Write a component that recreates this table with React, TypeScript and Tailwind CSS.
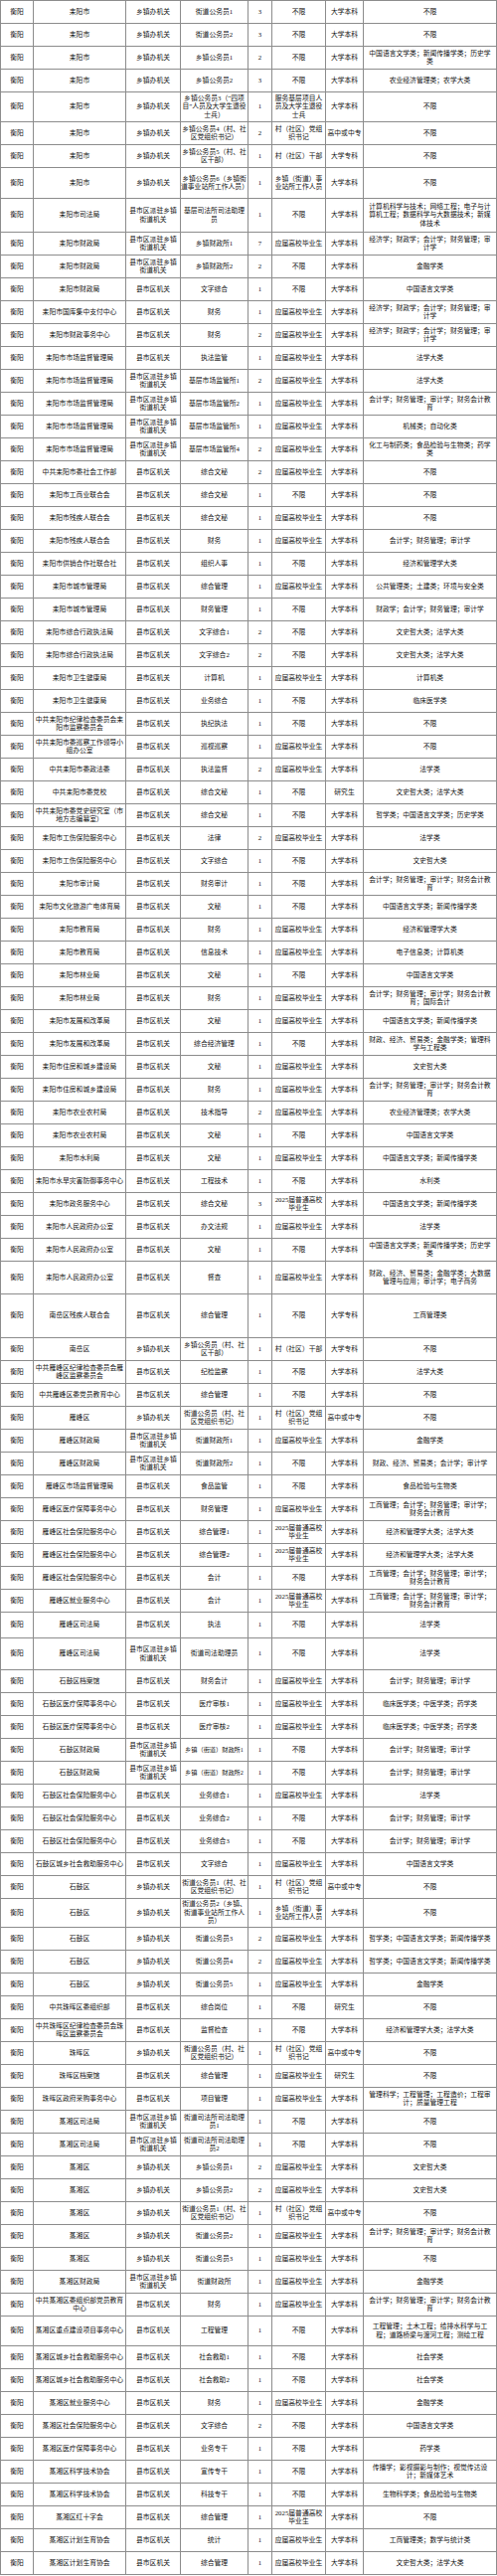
type Row = [string, string, string, number, string, string, string, string?, string?];

const A = "县市区机关";
const P = "县市区派驻乡镇街道机关";
const X = "乡镇办机关";
const Y = "应届高校毕业生";
const N = "不限";
const B = "大学本科";
const Z = "大学专科";
const G = "高中或中专";
const R = "研究生";
const J = "2025届普通高校毕业生";
const S = "村（社区）党组织书记";
const KC = "会计学；财务管理；审计学";
const KJ = "会计学；财务管理；审计学；财务会计教育";
const JC = "经济学；财政学；会计学；财务管理；审计学";
const GS = "工商管理；会计学；财务管理；审计学；财务会计教育";

const rows: Row[] = [
  ["耒阳市", X, "街道公务员1", 3, N, B, N],
  ["耒阳市", X, "街道公务员2", 3, N, B, N],
  ["耒阳市", X, "乡镇公务员1", 2, N, B, "中国语言文学类；新闻传播学类；历史学类"],
  ["耒阳市", X, "乡镇公务员2", 3, N, B, "农业经济管理类；农学大类"],
  ["耒阳市", X, "乡镇公务员3（“四项目”人员及大学生退役士兵）", 1, "服务基层项目人员及大学生退役士兵", B, N, "h-[30px]"],
  ["耒阳市", X, "乡镇公务员4（村、社区党组织书记）", 2, S, G, N],
  ["耒阳市", X, "乡镇公务员5（村、社区干部）", 1, "村（社区）干部", Z, N],
  ["耒阳市", X, "乡镇公务员6（乡镇街道事业站所工作人员）", 1, "乡镇（街道）事业站所工作人员", B, N, "h-[31px]"],
  ["耒阳市司法局", P, "基层司法所司法助理员", 1, N, B, "计算机科学与技术；网络工程；电子与计算机工程；数据科学与大数据技术；新媒体技术", "h-[34px]"],
  ["耒阳市财政局", P, "乡镇财政所1", 7, Y, B, JC],
  ["耒阳市财政局", P, "乡镇财政所2", 2, N, B, "金融学类"],
  ["耒阳市财政局", A, "文字综合", 1, N, B, "中国语言文学类"],
  ["耒阳市国库集中支付中心", A, "财务", 1, Y, B, JC],
  ["耒阳市财政事务中心", A, "财务", 2, Y, B, JC],
  ["耒阳市市场监督管理局", A, "执法监管", 1, Y, B, "法学大类"],
  ["耒阳市市场监督管理局", P, "基层市场监管所1", 2, Y, B, "法学大类"],
  ["耒阳市市场监督管理局", P, "基层市场监管所2", 1, Y, B, KJ],
  ["耒阳市市场监督管理局", P, "基层市场监管所3", 1, Y, B, "机械类；自动化类"],
  ["耒阳市市场监督管理局", P, "基层市场监管所4", 2, Y, B, "化工与制药类；食品检验与生物类；药学类"],
  ["中共耒阳市委社会工作部", A, "综合文秘", 2, Y, B, N],
  ["耒阳市工商业联合会", A, "综合文秘", 1, N, B, N],
  ["耒阳市残疾人联合会", A, "综合文秘", 1, Y, B, N],
  ["耒阳市残疾人联合会", A, "财务", 1, Y, B, KC],
  ["耒阳市供销合作社联合社", A, "组织人事", 1, N, B, "经济和管理学大类"],
  ["耒阳市城市管理局", A, "综合管理", 1, Y, B, "公共管理类；土建类；环境与安全类"],
  ["耒阳市城市管理局", A, "财务管理", 1, N, B, "财政学；会计学；财务管理；审计学"],
  ["耒阳市综合行政执法局", A, "文字综合1", 2, N, B, "文史哲大类；法学大类"],
  ["耒阳市综合行政执法局", A, "文字综合2", 2, N, B, "文史哲大类；法学大类"],
  ["耒阳市卫生健康局", A, "计算机", 1, Y, B, "计算机类"],
  ["耒阳市卫生健康局", A, "业务综合", 1, N, B, "临床医学类"],
  ["中共耒阳市纪律检查委员会耒阳市监察委员会", A, "执纪执法", 1, N, B, N],
  ["中共耒阳市委巡察工作领导小组办公室", A, "巡视巡察", 1, Y, B, N],
  ["中共耒阳市委政法委", A, "执法监督", 2, Y, B, "法学类"],
  ["中共耒阳市委党校", A, "综合文秘", 1, N, R, "文史哲大类；法学大类"],
  ["中共耒阳市委党史研究室（市地方志编纂室）", A, "综合文秘", 1, N, B, "哲学类；中国语言文学类；历史学类"],
  ["耒阳市工伤保险服务中心", A, "法律", 2, Y, B, "法学类"],
  ["耒阳市工伤保险服务中心", A, "文字综合", 1, N, B, "文史哲大类"],
  ["耒阳市审计局", A, "财务审计", 1, N, B, KJ],
  ["耒阳市文化旅游广电体育局", A, "文秘", 1, N, B, "中国语言文学类；新闻传播学类"],
  ["耒阳市教育局", A, "财务", 1, Y, B, "经济和管理学大类"],
  ["耒阳市教育局", A, "信息技术", 1, Y, B, "电子信息类；计算机类"],
  ["耒阳市林业局", A, "文秘", 1, N, B, "中国语言文学类"],
  ["耒阳市林业局", A, "财务", 1, Y, B, "会计学；财务管理；审计学；财务会计教育；国际会计"],
  ["耒阳市发展和改革局", A, "文秘", 1, Y, B, "中国语言文学类；新闻传播学类"],
  ["耒阳市发展和改革局", A, "综合经济管理", 1, N, B, "财政、经济、贸易类；金融学类；管理科学与工程类"],
  ["耒阳市住房和城乡建设局", A, "文秘", 1, Y, B, "文史哲大类"],
  ["耒阳市住房和城乡建设局", A, "财务", 1, Y, B, KJ],
  ["耒阳市农业农村局", A, "技术指导", 2, Y, B, "农业经济管理类；农学大类"],
  ["耒阳市农业农村局", A, "文秘", 1, N, B, "中国语言文学类"],
  ["耒阳市水利局", A, "文秘", 1, Y, B, "中国语言文学类；新闻传播学类"],
  ["耒阳市水旱灾害防御事务中心", A, "工程技术", 1, N, B, "水利类"],
  ["耒阳市政务服务中心", A, "综合文秘", 3, J, B, "中国语言文学类；新闻传播学类"],
  ["耒阳市人民政府办公室", A, "办文法规", 1, Y, B, "法学类"],
  ["耒阳市人民政府办公室", A, "文秘", 1, N, B, "中国语言文学类；新闻传播学类；历史学类"],
  ["耒阳市人民政府办公室", A, "督查", 1, Y, B, "财政、经济、贸易类；金融学类；大数据管理与应用；审计学；电子商务", "h-[33px]"],
  ["南岳区残疾人联合会", A, "综合管理", 1, N, Z, "工商管理类", "h-[44px]"],
  ["南岳区", X, "乡镇公务员（村、社区干部）", 1, "村（社区）干部", Z, N],
  ["中共雁峰区纪律检查委员会雁峰区监察委员会", A, "纪检监察", 1, N, B, "法学大类"],
  ["中共雁峰区委党员教育中心", A, "综合管理", 1, N, B, N],
  ["雁峰区", X, "街道公务员（村、社区党组织书记）", 1, S, G, N],
  ["雁峰区财政局", P, "街道财政所1", 1, Y, B, "金融学类"],
  ["雁峰区财政局", P, "街道财政所2", 1, N, B, "财政、经济、贸易类；会计学；审计学"],
  ["雁峰区市场监督管理局", A, "食品监管", 1, N, B, "食品检验与生物类"],
  ["雁峰区医疗保障事务中心", A, "财务管理", 1, Y, B, GS],
  ["雁峰区社会保险服务中心", A, "综合管理1", 1, J, B, "经济和管理学大类；法学大类"],
  ["雁峰区社会保险服务中心", A, "综合管理2", 1, J, B, "经济和管理学大类；法学大类"],
  ["雁峰区社会保险服务中心", A, "会计", 1, N, B, GS],
  ["雁峰区就业服务中心", A, "会计", 1, J, B, GS],
  ["雁峰区司法局", A, "执法", 1, N, B, "法学类", "h-[26px]"],
  ["雁峰区司法局", P, "街道司法助理员", 1, N, B, "法学类", "h-[32px]"],
  ["石鼓区档案馆", A, "财务会计", 1, Y, B, KC],
  ["石鼓区医疗保障事务中心", A, "医疗审核1", 1, Y, B, "临床医学类；中医学类；药学类"],
  ["石鼓区医疗保障事务中心", A, "医疗审核2", 1, Y, B, "临床医学类；中医学类；药学类"],
  ["石鼓区财政局", P, "乡镇（街道）财政所1", 1, N, B, KC, undefined, "text-[6.2px]"],
  ["石鼓区财政局", P, "乡镇（街道）财政所2", 1, N, B, KC, undefined, "text-[6.2px]"],
  ["石鼓区社会保险服务中心", A, "业务综合1", 1, Y, B, "法学类"],
  ["石鼓区社会保险服务中心", A, "业务综合2", 1, N, B, KC],
  ["石鼓区社会保险服务中心", A, "业务综合3", 1, N, B, KC],
  ["石鼓区城乡社会救助服务中心", A, "文字综合", 1, Y, B, "中国语言文学类"],
  ["石鼓区", X, "街道公务员1（村、社区党组织书记）", 1, S, G, N],
  ["石鼓区", X, "街道公务员2（乡镇、街道事业站所工作人员）", 1, "乡镇（街道）事业站所工作人员", B, N, "h-[29px]"],
  ["石鼓区", X, "街道公务员3", 2, Y, B, "哲学类；中国语言文学类；新闻传播学类"],
  ["石鼓区", X, "街道公务员4", 2, Y, B, "哲学类；中国语言文学类；新闻传播学类"],
  ["石鼓区", X, "街道公务员5", 1, Y, B, "金融学类"],
  ["中共珠晖区委组织部", A, "综合岗位", 1, N, R, N],
  ["中共珠晖区纪律检查委员会珠晖区监察委员会", A, "监督检查", 1, N, B, "经济和管理学大类；法学大类"],
  ["珠晖区", X, "街道公务员（村、社区党组织书记）", 1, S, G, N],
  ["珠晖区档案馆", A, "综合管理", 1, Y, R, N],
  ["珠晖区政府采购事务中心", A, "项目管理", 1, Y, B, "管理科学；工程管理；工程造价；工程审计；质量管理工程"],
  ["蒸湘区司法局", P, "街道司法所司法助理员1", 1, N, B, N],
  ["蒸湘区司法局", P, "街道司法所司法助理员2", 1, N, B, N],
  ["蒸湘区", X, "乡镇公务员1", 2, Y, B, "文史哲大类"],
  ["蒸湘区", X, "乡镇公务员2", 2, Y, B, "文史哲大类"],
  ["蒸湘区", X, "街道公务员1（村、社区党组织书记）", 1, S, G, N],
  ["蒸湘区", X, "街道公务员2", 1, Y, B, KJ],
  ["蒸湘区", X, "街道公务员3", 1, Y, B, N],
  ["蒸湘区财政局", P, "街道财政所", 1, Y, B, "金融学类"],
  ["中共蒸湘区委组织部党员教育中心", A, "财务", 1, Y, B, KJ],
  ["蒸湘区重点建设项目事务中心", A, "工程管理", 1, N, B, "工程管理；土木工程；给排水科学与工程；道路桥梁与渡河工程；测绘工程", "h-[30px]"],
  ["蒸湘区城乡社会救助服务中心", A, "社会救助1", 1, N, B, "社会学类"],
  ["蒸湘区城乡社会救助服务中心", A, "社会救助2", 1, N, B, "社会学类"],
  ["蒸湘区就业服务中心", A, "财务", 1, Y, B, "金融学类"],
  ["蒸湘区社会保险服务中心", A, "文字综合", 2, N, B, "中国语言文学类"],
  ["蒸湘区医疗保障事务中心", A, "业务专干", 1, N, B, "药学类"],
  ["蒸湘区科学技术协会", A, "宣传专干", 1, N, B, "传播学；影视摄影与制作；视觉传达设计；新媒体艺术"],
  ["蒸湘区科学技术协会", A, "科技专干", 1, N, B, "生物科学类；食品检验与生物类"],
  ["蒸湘区红十字会", A, "综合管理", 1, J, B, N],
  ["蒸湘区计划生育协会", A, "统计", 1, Y, B, "工商管理类；数学与统计类"],
  ["蒸湘区计划生育协会", A, "综合管理", 1, Y, B, "文史哲大类；法学大类"],
];

const cell = "flex items-center justify-center text-center border-r border-b border-[#8c8c8c]";

const App = () => {
  return (
    <div className="w-[500px] bg-white text-[#111] text-[6.8px] leading-[8.5px] font-['Liberation_Serif','Noto_Sans_CJK_SC',serif]">
      <div className="border-l border-t border-[#8c8c8c]">
        {rows.map(([unit, level, job, count, who, edu, major, h, jobCls], i) => (
          <div
            key={i}
            className={`grid grid-cols-[33px_93px_55px_68px_24px_54px_38px_134px] ${h ?? "h-[23px]"}`}
          >
            <div className={cell}>衡阳</div>
            <div className={`${cell} px-[1px]`}>{unit}</div>
            <div className={`${cell} px-[1px]`}>{level}</div>
            <div className={`${cell} ${jobCls ?? ""}`}>{job}</div>
            <div className={cell}>{count}</div>
            <div className={cell}>{who}</div>
            <div className={cell}>{edu}</div>
            <div className={`${cell} px-[4px]`}>{major}</div>
          </div>
        ))}
      </div>
    </div>
  );
};

export default App;
